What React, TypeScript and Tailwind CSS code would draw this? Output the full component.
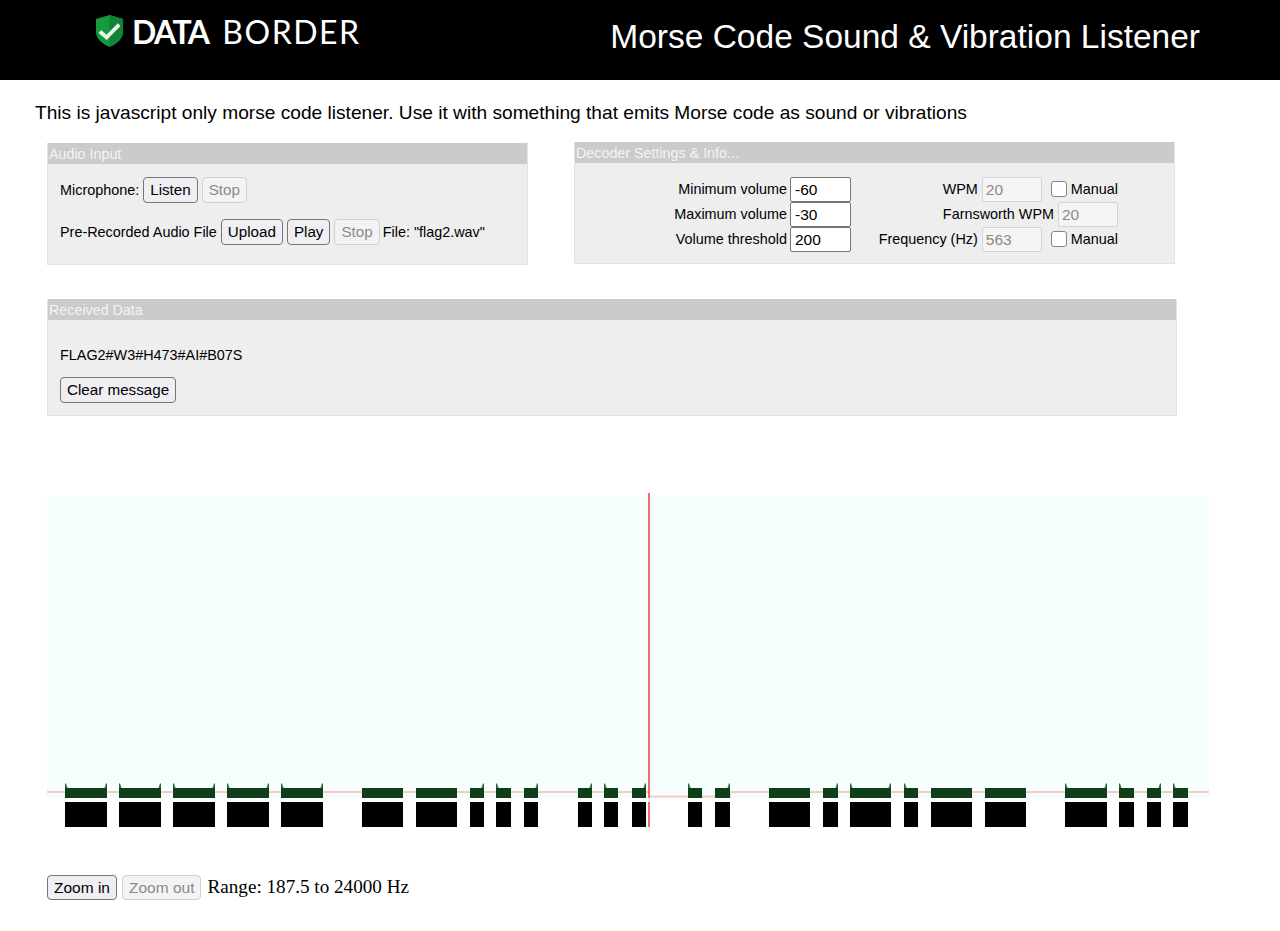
const bars: [number, number, string][] = [
  [65, 107, 'b'], [119, 161, 'b'], [173, 215, 'b'], [227, 269, 'b'], [281, 323, 'b'],
  [362, 403, 'n'], [416, 457, 'n'], [470, 484, 'r'], [496, 511, 'l'], [524, 538, 'r'],
  [578, 592, 'r'], [604, 618, 'l'], [632, 646, 'r'], [688, 702, 'l'], [715, 730, 'r'],
  [769, 810, 'n'], [823, 838, 'r'], [850, 891, 'b'], [904, 918, 'l'], [931, 972, 'n'],
  [985, 1026, 'n'], [1065, 1107, 'b'], [1119, 1134, 'l'], [1147, 1161, 'r'], [1173, 1188, 'l'],
];

const btn = 'h-[26px] px-[6px] rounded-[4px] border border-[#767676] bg-[#efeff3] text-black text-[15.2px] leading-none';
const btnOff = 'h-[26px] px-[6px] rounded-[4px] border border-[#d0d0d0] bg-[#f3f3f5] text-[#8a8a8a] text-[15.2px] leading-none';
const field = 'w-[61px] h-[25px] px-[4px] rounded-[2px] border border-[#767676] bg-white text-black text-[15.5px] outline-none';
const fieldOff = 'w-[60px] h-[25px] px-[3px] rounded-[2px] border border-[#d4d4d4] bg-[#f5f5f5] text-[#8a8a8a] text-[15.5px] outline-none';

const Panel = ({ title, className, children }: { title: string; className: string; children: React.ReactNode }) => (
  <section className={`bg-[#eeeeee] border-x border-b border-[#e2e2e2] ${className}`}>
    <h2 className="h-[21px] bg-[#cbcbcb] pl-[1px] text-[14.3px] leading-[22px] text-[#f4f4f4]">{title}</h2>
    {children}
  </section>
);

const Manual = () => (
  <label className="flex items-center">
    <span className="ml-[5px] w-[16px] h-[16px] rounded-[3px] border border-[#858585] bg-white" />
    <span className="ml-[4px] mt-[1px]">Manual</span>
  </label>
);

const Spectrum = () => (
  <svg viewBox="47 493 1162 335" className="block ml-[47px] mt-[77px] w-[1162px] h-[335px]">
    <rect x="47" y="496" width="1162" height="302" fill="#f6fdfd" />
    <path d="M47 792H649V796.5H730V792H1209" fill="none" stroke="#f8c9c9" strokeWidth="2" />
    {bars.map(([a, b, spike]) => (
      <g key={a}>
        <rect x={a} y="788" width={b - a} height="10" fill="#0f3f18" />
        {(spike === 'l' || spike === 'b') && <path d={`M${a} 788V783.5L${a + 1} 783.5L${a + 2.5} 788Z`} fill="#2b6a3c" />}
        {(spike === 'r' || spike === 'b') && <path d={`M${b} 788V783.5L${b - 1} 783.5L${b - 2.5} 788Z`} fill="#2b6a3c" />}
        <rect x={a} y="802" width={b - a} height="25" fill="#000" />
      </g>
    ))}
    <path d="M649 493V798M649 802V827" stroke="#f26a6a" strokeWidth="2" />
  </svg>
);

export default function App() {
  return (
    <div className="font-['Liberation_Sans',sans-serif] text-black bg-white min-h-[931px]">
      <header className="h-[80px] bg-black flex items-start text-white">
        <div className="ml-[95px] mt-[14px] flex items-center">
          <svg width="29" height="34" viewBox="0 0 30 35">
            <path d="M15 1L29 5V18C29 26 22 31 15 34C8 31 1 26 1 18V5Z" fill="#16983f" />
            <path d="M15 1L29 5V18C29 26 22 31 15 34Z" fill="#0f8436" />
            <path d="M5 18L12 24L25 11" fill="none" stroke="#e8f5ea" strokeWidth="4" />
          </svg>
          <span className="ml-[8px] mt-[2px] font-['Lato',sans-serif] text-[32px] leading-none">
            <span className="font-bold tracking-[-1.6px]">DATA</span>
            <span className="ml-[14px] tracking-[1.5px]">BORDER</span>
          </span>
        </div>
        <h1 className="ml-auto mr-[80px] mt-[17px] text-[33.5px] leading-[40px]">Morse Code Sound &amp; Vibration Listener</h1>
      </header>

      <p className="ml-[35px] mt-[21px] text-[19.15px] leading-[24px]">
        This is javascript only morse code listener. Use it with something that emits Morse code as sound or vibrations
      </p>

      <div className="ml-[47px] mt-[18px] flex items-start text-[14.4px]">
        <Panel title="Audio Input" className="w-[481px] h-[122px]">
          <div className="ml-[12px] mt-[13px] flex items-center gap-[4px]">
            <span className="mt-[1px]">Microphone:</span>
            <button className={btn}>Listen</button>
            <button disabled className={btnOff}>Stop</button>
          </div>
          <div className="ml-[12px] mt-[16px] flex items-center gap-[4px]">
            <span className="mt-[2px]">Pre-Recorded Audio File</span>
            <button className={btn}>Upload</button>
            <button className={`${btn} px-[5.5px]`}>Play</button>
            <button disabled className={btnOff}>Stop</button>
            <span className="mt-[2px] -ml-[1px]">File: "flag2.wav"</span>
          </div>
        </Panel>

        <Panel title="Decoder Settings &amp; Info..." className="ml-[46px] -mt-[1px] w-[601px] h-[122px]">
          <div className="mt-[14px] flex">
            <div className="w-[276px]">
              {[['Minimum volume', '-60'], ['Maximum volume', '-30'], ['Volume threshold', '200']].map(([label, value]) => (
                <div key={label} className="h-[25px] flex items-center justify-end gap-[3px]">
                  <span className="mt-[1px]">{label}</span>
                  <input readOnly value={value} className={field} />
                </div>
              ))}
            </div>
            <div className="w-[267px]">
              <div className="h-[25px] flex items-center justify-end gap-[4px]">
                <span className="mt-[1px]">WPM</span>
                <input disabled value="20" className={fieldOff} />
                <Manual />
              </div>
              <div className="h-[25px] flex items-center justify-end gap-[4px]">
                <span className="mt-[1px]">Farnsworth WPM</span>
                <input disabled value="20" className={fieldOff} />
              </div>
              <div className="h-[25px] flex items-center justify-end gap-[4px]">
                <span className="mt-[1px]">Frequency (Hz)</span>
                <input disabled value="563" className={fieldOff} />
                <Manual />
              </div>
            </div>
          </div>
        </Panel>
      </div>

      <div className="ml-[47px] mt-[34px] text-[14.4px]">
        <Panel title="Received Data" className="w-[1130px] h-[117px]">
          <p className="ml-[12px] mt-[26px] leading-[18px]">FLAG2#W3#H473#AI#B07S</p>
          <button className={`${btn} ml-[12px] mt-[13px]`}>Clear message</button>
        </Panel>
      </div>

      <Spectrum />

      <div className="ml-[47px] mt-[45px] flex items-center gap-[5px] font-['Liberation_Serif',serif] text-[19.15px]">
        <button className="h-[25px] px-[6px] rounded-[4px] border border-[#767676] bg-[#efeff3] font-['Liberation_Sans',sans-serif] text-[15.5px] leading-none">Zoom in</button>
        <button disabled className="h-[25px] px-[6px] rounded-[4px] border border-[#d0d0d0] bg-[#f3f3f5] text-[#8a8a8a] font-['Liberation_Sans',sans-serif] text-[15.5px] leading-none">Zoom out</button>
        <span className="ml-[1px]">Range: 187.5 to 24000 Hz</span>
      </div>
    </div>
  );
}
